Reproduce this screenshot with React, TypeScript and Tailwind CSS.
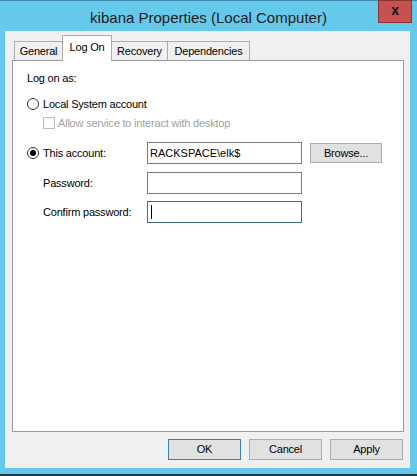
export default function App() {
  return (
    <div className="flex h-[476px] w-[417px] flex-col border-t border-b-2 border-t-[#3f8eaf] border-b-[#1d3a49] bg-[#67c9ea] font-['Liberation_Sans',Arial,sans-serif] text-[11px] tracking-[-0.2px] text-black">
      {/* title bar */}
      <div className="grid h-[30px] grid-cols-[1fr_auto_1fr]">
        <div />
        <div className="pt-[8px] text-[15px] leading-[18px] tracking-normal text-[#1b1b1b]">kibana Properties (Local Computer)</div>
        <div className="flex justify-end pr-[5px]">
          <div className="-mt-px flex h-[23px] w-[34px] items-center justify-center border border-[#8a3535] bg-[#c75050] pb-[3px] text-[14px] font-bold leading-none text-[#111]">
            x
          </div>
        </div>
      </div>

      {/* dialog body */}
      <div className="mb-[6px] ml-[5px] mr-[7px] flex flex-1 flex-col bg-[#f0f0f0]">
        <div className="ml-[7px] mr-[6px] mt-[4px] flex flex-1 flex-col">
          <div className="relative z-10 flex h-[26px] items-end pl-[2px]">
            <div className="mb-px flex h-[19px] w-[49px] items-center justify-center border border-b-0 border-[#acacac] bg-[#f0f0f0]">
              General
            </div>
            <div className="relative z-10 -ml-px flex h-[26px] w-[50px] justify-center border border-b-0 border-[#acacac] bg-white pt-[4px] leading-[14px]">
              Log On
            </div>
            <div className="-ml-px mb-px flex h-[19px] w-[57px] items-center justify-center border border-b-0 border-[#acacac] bg-[#f0f0f0]">
              Recovery
            </div>
            <div className="-ml-px mb-px flex h-[19px] w-[83px] items-center justify-center border border-b-0 border-[#acacac] bg-[#f0f0f0]">
              Dependencies
            </div>
          </div>

          <div className="-mt-px flex-1 border border-[#9a9a9a] bg-white pl-[14px] pt-[9px]">
            <div className="h-[16px] leading-[16px]">Log on as:</div>

            <div className="mt-[10px] flex h-[16px] items-center gap-[4px]">
              <Radio />
              <span>Local System account</span>
            </div>

            <div className="mt-[3px] flex h-[16px] items-center gap-[3px] pl-[16px]">
              <span className="h-[12px] w-[12px] border border-[#bcbcbc] bg-white" />
              <span className="text-[#a0a0a0]">Allow service to interact with desktop</span>
            </div>

            <div className="mt-[11px] flex h-[22px] items-center">
              <div className="flex w-[120px] items-center gap-[4px]">
                <Radio checked />
                <span>This account:</span>
              </div>
              <div className="flex h-[22px] w-[155px] items-center border border-[#7a7a7a] bg-white pl-[2px] tracking-normal">
                RACKSPACE\elk$
              </div>
              <button className="ml-[8px] h-[20px] w-[72px] border border-[#adadad] bg-[#e1e1e1]">Browse...</button>
            </div>

            <div className="mt-[8px] flex h-[22px] items-center pl-[16px]">
              <span className="w-[104px]">Password:</span>
              <div className="h-[22px] w-[155px] border border-[#7a7a7a] bg-white" />
            </div>

            <div className="mt-[7px] flex h-[22px] items-center pl-[16px]">
              <span className="w-[104px]">Confirm password:</span>
              <div className="flex h-[22px] w-[155px] items-center border border-[#3e6d8c] bg-white">
                <span className="ml-[3px] h-[14px] w-px bg-black" />
              </div>
            </div>
          </div>
        </div>

        <div className="mb-[8px] mr-[7px] mt-[7px] flex justify-end gap-[8px]">
          <button className="h-[21px] w-[73px] border border-[#3c7fb1] bg-[#e1e1e1]">OK</button>
          <button className="h-[21px] w-[73px] border border-[#adadad] bg-[#e1e1e1]">Cancel</button>
          <button className="h-[21px] w-[73px] border border-[#adadad] bg-[#e1e1e1]">Apply</button>
        </div>
      </div>
    </div>
  );
}

function Radio({ checked = false }: { checked?: boolean }) {
  return (
    <span className="flex h-[12px] w-[12px] items-center justify-center rounded-full border border-[#333] bg-white">
      {checked && <span className="h-[6px] w-[6px] rounded-full bg-black" />}
    </span>
  );
}
